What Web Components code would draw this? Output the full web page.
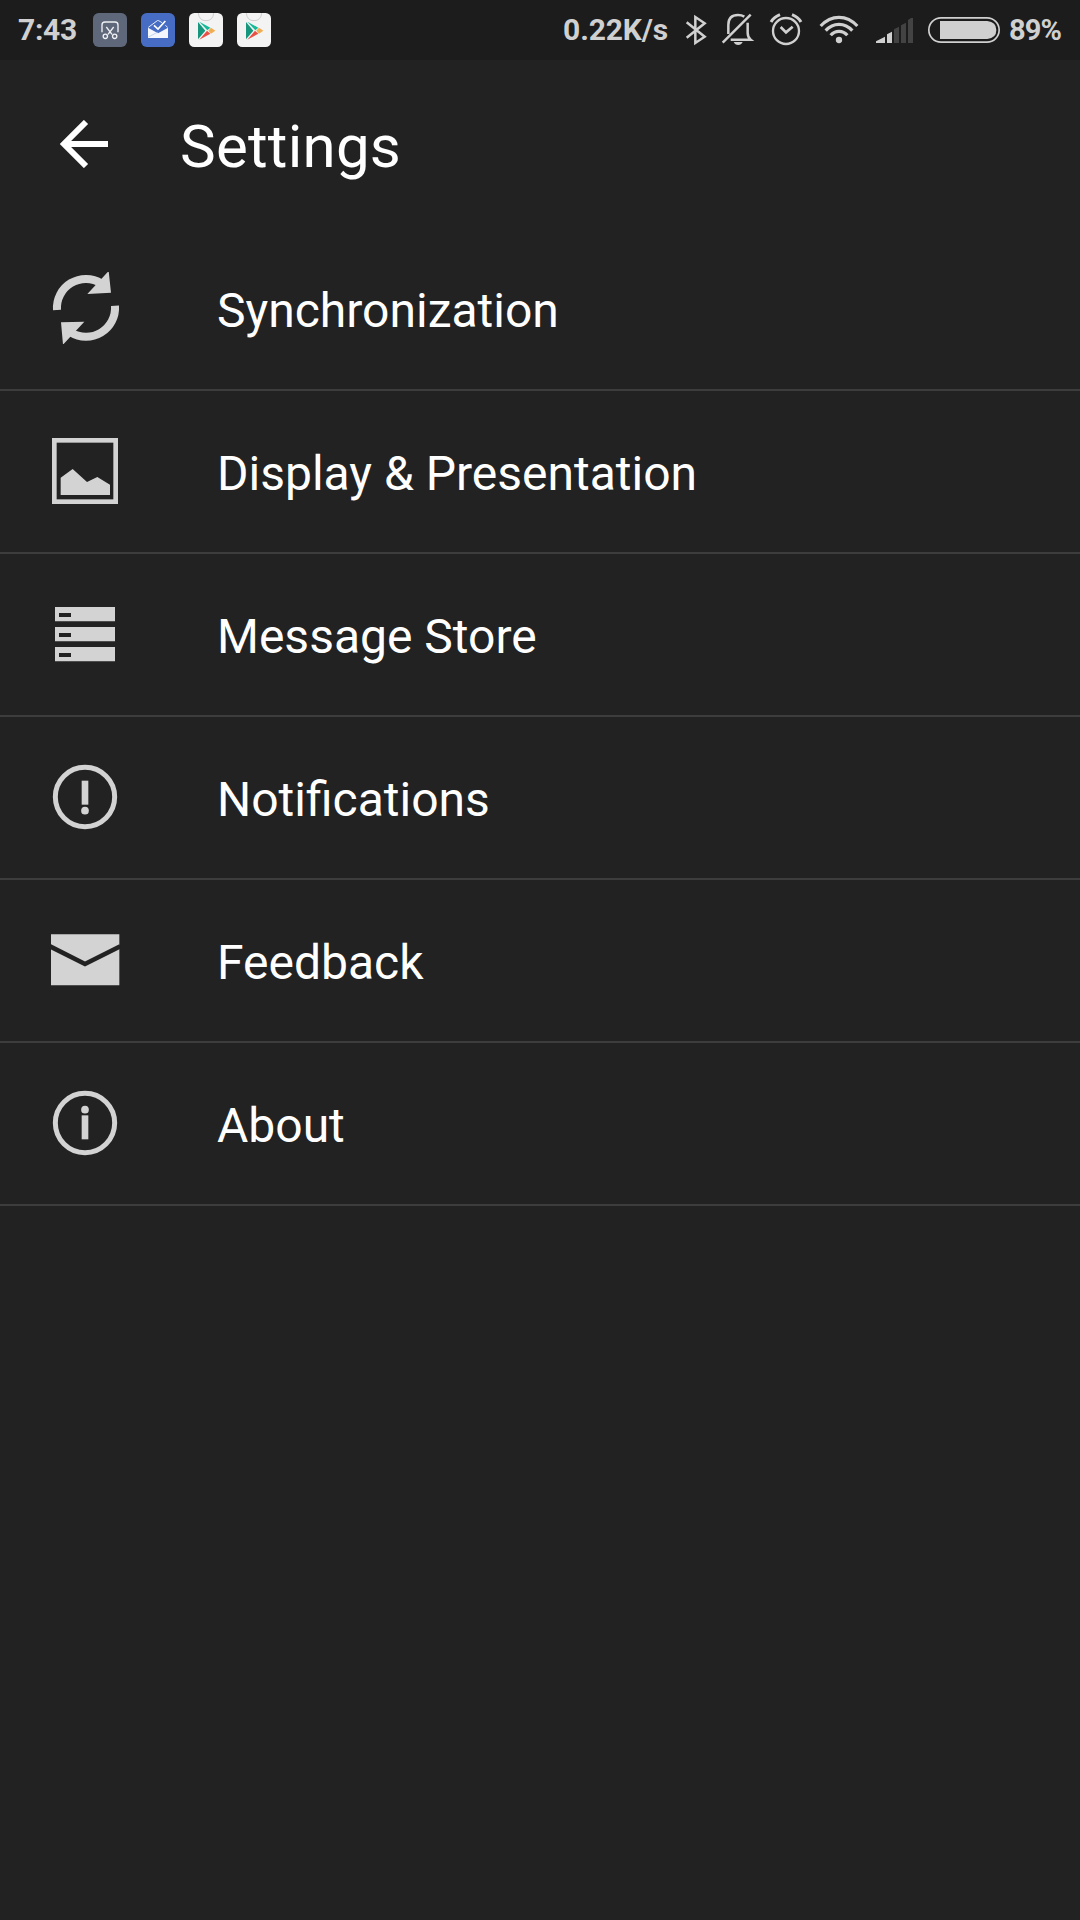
<!DOCTYPE html>
<html lang="en">
<head>
<meta charset="utf-8">
<title>Settings</title>
<style>
  body {
    margin: 0;
    background: #222222;
    color: #fff;
    font-family: Roboto, 'Noto Sans', sans-serif;
  }
</style>
</head>
<body>
<settings-screen></settings-screen>

<script>
// view = viewBox, w / h = drawn size; artwork is drawn on a 3x grid
const ICONS = {
  shot: { view: '279 39 102 102', w: 34, h: 34, body: `
    <rect x="279" y="39" width="102" height="102" rx="17" fill="#5f677b"/>
    <g fill="none" stroke="#f0f1f4" stroke-width="4">
      <path d="M306 97V75q0-9 9-9h30q9 0 9 9v22"/>
      <path d="M319 81l17 22M341 81l-17 22"/>
      <circle cx="316" cy="109" r="6.5"/><circle cx="344" cy="109" r="6.5"/>
    </g>` },
  inbox: { view: '423 39 102 102', w: 34, h: 34, body: `
    <rect x="423" y="39" width="102" height="102" rx="17" fill="#466dc3"/>
    <path d="M444 83l30 17 30-17v31h-60z" fill="#f4f7fd"/>
    <path d="M445 111l29-15" stroke="#aabfe9" stroke-width="2"/>
    <path d="M445 82l27-20q2-1 4 0l10 6M496 76l7 6" fill="none" stroke="#e4ebf8" stroke-width="3"/>
    <path d="M462 76l12 11 22-24" fill="none" stroke="#fff" stroke-width="5"/>` },
  play: { view: '567 39 102 102', w: 34, h: 34, body: `
    <rect x="567" y="39" width="102" height="102" rx="16" fill="#f3f3f3"/>
    <path d="M595 39q2 23 23 23t23-23" fill="none" stroke="#cfcfcf" stroke-width="3"/>
    <path d="M594 66v52l22-26z" fill="#15967d"/>
    <path d="M598 65l33 18-9 8z" fill="#14b99a"/>
    <path d="M598 119l33-18-10-9z" fill="#e94f45"/>
    <path d="M625 92l8-9 13 9-13 9z" fill="#f0ad52"/>` },
  bluetooth: { view: '420 0 102 180', w: 34, h: 60, body: `
    <path d="M440 67l54 43-28 19V51l28 19-54 43" fill="none" stroke="#d0d0d0" stroke-width="7.500"/>` },
  mute: { view: '522 0 144 180', w: 48, h: 60, body: `
    <g fill="none" stroke="#d0d0d0" stroke-width="7.500">
      <path d="M548 128L632 44"/>
      <path d="M565 102V75q0-30 29-30 11 0 19 5"/>
      <path d="M623 68v30q0 14 9 21h-60"/>
    </g>
    <path d="M581 126h27q-4 9-13.500 9t-13.500-9z" fill="#d0d0d0"/>` },
  alarm: { view: '666 0 144 180', w: 48, h: 60, body: `
    <g fill="none" stroke="#d0d0d0" stroke-width="7">
      <circle cx="738" cy="93" r="39"/>
      <path d="M722 81l16 16 20-17" stroke-width="8"/>
      <path d="M693 66q9-15 27-22M783 66q-9-15-27-22" stroke-width="9"/>
    </g>` },
  wifi: { view: '30 0 168 180', w: 56, h: 60, body: `
    <g fill="none" stroke="#d0d0d0" stroke-width="9.500">
      <path d="M62 78q24-26 55-26t55 26"/>
      <path d="M77 92q17-19 40-19t40 19"/>
      <path d="M92 106q10-12 25-12t25 12"/>
    </g>
    <circle cx="117" cy="120" r="9.500" fill="#d0d0d0"/>` },
  signal: { view: '198 0 162 180', w: 54, h: 60, body: `
    <path d="M228 129v-5l27-14v19zM261 129v-26l15-8v34z" fill="#d0d0d0"/>
    <path d="M282 129V88l15-8v49zM303 129V76l15-8v61zM324 129V60l9-6h6v75z" fill="#434343"/>` },
  battery: { view: '360 0 246 180', w: 82, h: 60, body: `
    <rect x="386.500" y="53.500" width="211" height="73" rx="36.500" fill="none" stroke="#d0d0d0" stroke-width="5"/>
    <path d="M420 63h142q27 3 27 27t-27 27h-142z" fill="#d0d0d0"/>` },
  back: { view: '90 90 144 144', w: 48, h: 48, body: `
    <path d="M168 96l-66 66 66 66M101 162h133" fill="none" stroke="#fff" stroke-width="18"/>` },
  sync: { view: '57 66 216 216', w: 72, h: 72, body: `
    <path d="M81 180a87 87 0 0 1 133-80M255 167a87 87 0 0 1-133 80" fill="none" stroke="#d3d3d3" stroke-width="24"/>
    <path d="M236 63l7 65-71 4zM99 284l-6-67 70-2z" fill="#d3d3d3"/>` },
  image: { view: '57 60 216 216', w: 72, h: 72, body: `
    <rect x="73" y="76" width="184" height="184" fill="none" stroke="#d3d3d3" stroke-width="14"/>
    <path d="M92 188l36-26 43 39 31-15 38 23v31H92z" fill="#d3d3d3"/>` },
  store: { view: '57 54 216 216', w: 72, h: 72, body: `
    <path d="M75 81h180v43H75zM75 141h180v43H75zM75 201h180v43H75z" fill="#d3d3d3"/>
    <path d="M87 99h36v12H87zM87 159h36v12H87zM87 219h36v12H87z" fill="#222"/>` },
  notice: { view: '57 63 216 216', w: 72, h: 72, body: `
    <circle cx="165" cy="171" r="89" fill="none" stroke="#d3d3d3" stroke-width="15"/>
    <path d="M155 122h20v72h-20z" fill="#d3d3d3"/>
    <circle cx="165" cy="212" r="11.500" fill="#d3d3d3"/>` },
  mail: { view: '57 57 216 216', w: 72, h: 72, body: `
    <path d="M63 88h205v153H63z" fill="#d3d3d3"/>
    <path d="M60 124l105 53 106-53" fill="none" stroke="#222" stroke-width="14"/>` },
  info: { view: '57 51 216 216', w: 72, h: 72, body: `
    <circle cx="165" cy="159" r="89" fill="none" stroke="#d3d3d3" stroke-width="15"/>
    <path d="M155 136h20v72h-20z" fill="#d3d3d3"/>
    <circle cx="165" cy="119" r="11.500" fill="#d3d3d3"/>` }
};

class AppIcon extends HTMLElement {
  constructor() {
    super();
    this.attachShadow({ mode: 'open' });
  }

  connectedCallback() {
    const icon = ICONS[this.getAttribute('name')];
    this.shadowRoot.innerHTML = `
      <style>
        :host { display: block; flex: none; }
        svg { display: block; }
      </style>
      <svg width="${icon.w}" height="${icon.h}" viewBox="${icon.view}">${icon.body}</svg>
    `;
  }
}

class StatusBar extends HTMLElement {
  constructor() {
    super();
    this.attachShadow({ mode: 'open' }).innerHTML = `
      <style>
        :host {
          display: flex;
          justify-content: space-between;
          height: 60px;
          background: #1c1c1c;
          color: #d0d0d0;
          font-size: 30px;
          font-weight: 700;
          line-height: 60px;
          white-space: nowrap;
        }
        .left, .right { display: flex; align-items: center; }
        .left { gap: 14px; padding-left: 18px; }
        .clock { width: 61px; letter-spacing: -0.3px; }
        .speed { padding-right: 12px; letter-spacing: -0.15px; }
        .level { width: 71px; padding-left: 7px; font-size: 29px; letter-spacing: -0.9px; }
      </style>
      <div class="left">
        <span class="clock">7:43</span>
        <app-icon name="shot"></app-icon>
        <app-icon name="inbox"></app-icon>
        <app-icon name="play"></app-icon>
        <app-icon name="play"></app-icon>
      </div>
      <div class="right">
        <span class="speed">0.22K/s</span>
        <app-icon name="bluetooth"></app-icon>
        <app-icon name="mute"></app-icon>
        <app-icon name="alarm"></app-icon>
        <app-icon name="wifi"></app-icon>
        <app-icon name="signal"></app-icon>
        <app-icon name="battery"></app-icon>
        <span class="level">89%</span>
      </div>
    `;
  }
}

class AppToolbar extends HTMLElement {
  constructor() {
    super();
    this.attachShadow({ mode: 'open' }).innerHTML = `
      <style>
        :host {
          display: flex;
          align-items: center;
          gap: 72px;
          height: 168px;
          padding-left: 60px;
          box-sizing: border-box;
        }
        h1 {
          margin: 5px 0 0;
          font-size: 60px;
          font-weight: 400;
          line-height: 70px;
          letter-spacing: 0.25px;
        }
      </style>
      <app-icon name="back"></app-icon>
      <h1><slot></slot></h1>
    `;
  }
}

class SettingsItem extends HTMLElement {
  constructor() {
    super();
    this.attachShadow({ mode: 'open' });
  }

  connectedCallback() {
    this.shadowRoot.innerHTML = `
      <style>
        :host {
          display: flex;
          align-items: center;
          gap: 96px;
          height: 163px;
          padding: 0 0 1px 49px;
          box-sizing: border-box;
          border-bottom: 2px solid #3d3d3d;
        }
        .label {
          padding-top: 5px;
          font-size: 48px;
          line-height: 56px;
        }
      </style>
      <app-icon name="${this.getAttribute('icon')}"></app-icon>
      <span class="label"><slot></slot></span>
    `;
  }
}

class SettingsScreen extends HTMLElement {
  constructor() {
    super();
    this.attachShadow({ mode: 'open' }).innerHTML = `
      <style>
        :host {
          display: flex;
          flex-direction: column;
          height: 1920px;
          overflow: hidden;
        }
      </style>
      <status-bar></status-bar>
      <app-toolbar>Settings</app-toolbar>
      <settings-item icon="sync">Synchronization</settings-item>
      <settings-item icon="image">Display &amp; Presentation</settings-item>
      <settings-item icon="store">Message Store</settings-item>
      <settings-item icon="notice">Notifications</settings-item>
      <settings-item icon="mail">Feedback</settings-item>
      <settings-item icon="info">About</settings-item>
    `;
  }
}

customElements.define('app-icon', AppIcon);
customElements.define('status-bar', StatusBar);
customElements.define('app-toolbar', AppToolbar);
customElements.define('settings-item', SettingsItem);
customElements.define('settings-screen', SettingsScreen);
</script>
</body>
</html>
